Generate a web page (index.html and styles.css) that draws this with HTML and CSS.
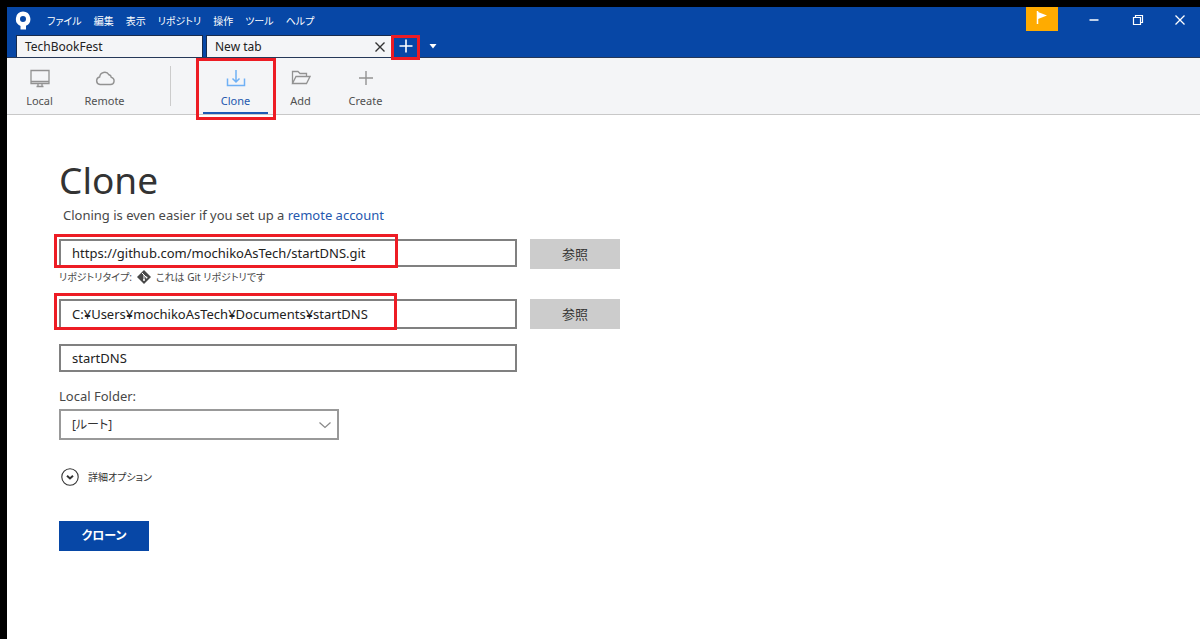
FILE: index.html
```html
<!DOCTYPE html>
<html lang="ja">
<head>
<meta charset="utf-8">
<meta name="viewport" content="width=device-width, initial-scale=1">
<title>Clone</title>
<link rel="stylesheet" href="styles.css">
</head>
<body>
<div class="window">
  <header class="titlebar">
    <div class="menu-row">
      <svg class="logo" viewBox="0 0 16 20" aria-hidden="true"><path fill="#fff" fill-rule="evenodd" d="M8 0.5a7.500 7.500 0 0 1 3 14.300V18.500H5.500V14.900A7.500 7.500 0 0 1 8 .5zM8 5a3 3 0 1 0 0 6a3 3 0 0 0 0-6z"/></svg>
      <nav class="menu">
        <button type="button">ファイル</button>
        <button type="button">編集</button>
        <button type="button">表示</button>
        <button type="button">リポジトリ</button>
        <button type="button">操作</button>
        <button type="button">ツール</button>
        <button type="button">ヘルプ</button>
      </nav>
      <div class="window-controls">
        <button type="button" class="flag" aria-label="Notifications"><svg width="12" height="14" viewBox="0 0 12 14"><path d="M1.500 0v13" stroke="#fff" stroke-width="1.500"/><path d="M2 1l9 3.500L2 8z" fill="#fff"/></svg></button>
        <button type="button" aria-label="Minimize"><svg width="12" height="12" viewBox="0 0 12 12"><path d="M1.500 6h9" stroke="#fff" stroke-width="1.500"/></svg></button>
        <button type="button" aria-label="Restore"><svg width="12" height="12" viewBox="0 0 12 12" fill="none" stroke="#fff" stroke-width="1.200"><path d="M1.500 3.500h7v7h-7zM3.500 3.500v-2h7v7h-2"/></svg></button>
        <button type="button" aria-label="Close"><svg width="12" height="12" viewBox="0 0 12 12"><path d="M1.500 1.500l9 9m0-9l-9 9" stroke="#fff" stroke-width="1.300"/></svg></button>
      </div>
    </div>
    <div class="tabs">
      <div class="tab"><button type="button" class="tab-name">TechBookFest</button></div>
      <div class="tab"><button type="button" class="tab-name">New tab</button><button type="button" class="tab-close" aria-label="Close tab"><svg width="12" height="12" viewBox="0 0 12 12"><path d="M1.500 1.500l9 9m0-9l-9 9" stroke="#333" stroke-width="1.400"/></svg></button></div>
      <button type="button" class="new-tab" aria-label="Open new tab"><svg width="14" height="14" viewBox="0 0 14 14"><path d="M7 .5v13M.5 7h13" stroke="#fff" stroke-width="1.600"/></svg><span class="mark mark-plus"></span></button>
      <button type="button" class="tab-list" aria-label="Tab list"><svg width="8" height="5" viewBox="0 0 8 5"><path d="M.5 0h7L4 4.500z" fill="#fff"/></svg></button>
    </div>
  </header>

  <nav class="toolbar">
    <button type="button" class="tool"><svg width="20" height="20" viewBox="0 0 20 20" fill="none" stroke="#929292" stroke-width="1.300"><path d="M1 2.500h18v13H1zM1 13.500h18"/><path d="M8 16v2.500h4V16M6.500 18.500h7"/></svg>Local</button>
    <button type="button" class="tool"><svg width="20" height="20" viewBox="0 0 20 20" fill="none" stroke="#929292" stroke-width="1.400"><path d="M5 16.500h10.500a3.600 3.600 0 0 0 .8-7.100A3 3 0 0 0 14 6.800A5 5 0 0 0 4.700 9A3.800 3.800 0 0 0 5 16.500z"/></svg>Remote</button>
    <span class="divider"></span>
    <button type="button" class="tool active"><svg width="20" height="20" viewBox="0 0 20 20" fill="none" stroke="#6fb1f5" stroke-width="1.500"><path d="M1.500 10.500v7h17v-7M10 2v11.500M6.500 10.500L10 14l3.500-3.500"/></svg>Clone<span class="mark mark-tool"></span></button>
    <button type="button" class="tool"><svg width="20" height="20" viewBox="0 0 20 20" fill="none" stroke="#929292" stroke-width="1.300"><path d="M1.500 15.500v-12h5.500l2 2h6.500v3M1.500 15.500l3.500-7h14l-3.500 7z"/></svg>Add</button>
    <button type="button" class="tool"><svg width="20" height="20" viewBox="0 0 20 20"><path d="M10 3v14M3 10h14" stroke="#929292" stroke-width="1.400"/></svg>Create</button>
  </nav>

  <main class="content">
    <h1>Clone</h1>
    <p class="hint">Cloning is even easier if you set up a <a href="#">remote account</a></p>
    <form class="form">
      <div class="row">
        <div class="field"><input type="text" aria-label="リポジトリ URL" value="https://github.com/mochikoAsTech/startDNS.git"><span class="mark mark-url"></span></div>
        <button type="button" class="browse">参照</button>
      </div>
      <p class="repo-type">リポジトリタイプ: <svg width="14" height="14" viewBox="0 0 14 14" aria-hidden="true"><path d="M7 0l7 7-7 7-7-7z" fill="#484848"/><path d="M5 3l2 2v5M7 5l2.500 2.500" stroke="#fff" fill="none"/><circle cx="7" cy="10" r="1" fill="#fff"/><circle cx="9.500" cy="7.500" r="1" fill="#fff"/></svg> これは Git リポジトリです</p>
      <div class="row">
        <div class="field tall"><input type="text" aria-label="保存先のパス" value="C:¥Users¥mochikoAsTech¥Documents¥startDNS"><span class="mark mark-path"></span></div>
        <button type="button" class="browse">参照</button>
      </div>
      <div class="field name"><input type="text" aria-label="名前" value="startDNS"></div>
      <label class="folder-label" for="folder">Local Folder:</label>
      <div class="folder">
        <select id="folder"><option>[ルート]</option></select>
        <svg class="chevron" width="12" height="8" viewBox="0 0 12 8"><path d="M.5 1.500L6 6.500l5.500-5" fill="none" stroke="#888" stroke-width="1.200"/></svg>
      </div>
      <button type="button" class="advanced"><svg width="18" height="18" viewBox="0 0 18 18" fill="none" stroke="#333"><circle cx="9" cy="9" r="8.200" stroke-width="1.100"/><path d="M6 7.800l3 2.700 3-2.700" stroke-width="2"/></svg>詳細オプション</button>
      <button type="submit" class="submit">クローン</button>
    </form>
  </main>
</div>
</body>
</html>
```
FILE: styles.css
```css
* { box-sizing: border-box; }

body {
  margin: 0;
  min-height: 100vh;
  padding: 7px 0 0 7px;
  display: flex;
  background: #000;
  color: #333;
  font-family: "Noto Sans", "Noto Sans CJK JP", sans-serif;
  font-size: 13px;
  font-feature-settings: "palt";
}

button, input, select { font: inherit; font-feature-settings: inherit; color: inherit; }
button { padding: 0; border: 0; background: none; }
svg { display: block; flex: none; }
p, h1 { margin: 0; }

.window { flex: 1; min-width: 0; background: #fff; }

.titlebar { background: #0747a6; color: #fff; border-bottom: 1px solid #253858; }
.menu-row { display: flex; align-items: center; height: 28px; padding-left: 8px; }
.logo { width: 16px; height: 20px; }
.menu { display: flex; gap: 12px; margin-left: 16px; font-size: 10px; line-height: 16px; white-space: nowrap; }
.window-controls { display: flex; align-self: stretch; margin-left: auto; }
.window-controls button { display: grid; place-items: center; width: 44px; height: 26px; }
.window-controls button:last-child { width: 40px; }
.window-controls .flag { width: 32px; height: 24px; margin-right: 14px; padding-bottom: 2px; background: #ffab00; }

.tabs { display: flex; align-items: stretch; gap: 3px; height: 22px; padding-left: 9px; }
.tab {
  display: flex;
  width: 187px;
  border: 1px solid #172b4d;
  border-bottom: 0;
  background: #f4f5f7;
  color: #222;
}
.tab-name { flex: 1; padding-left: 8px; text-align: left; font-size: 12px; line-height: 20px; }
.tab-close { width: 24px; display: grid; place-items: center; }
.new-tab { position: relative; display: grid; place-items: center; width: 20px; }
.tab-list { display: grid; place-items: center; width: 28px; }

.toolbar { display: flex; height: 57px; background: #f4f5f7; border-bottom: 1px solid #c8c8c8; }
.tool {
  position: relative;
  display: flex;
  flex-direction: column;
  align-items: center;
  gap: 6px;
  width: 65px;
  padding-top: 10px;
  border-bottom: 2px solid transparent;
  color: #505050;
  font-size: 11px;
  line-height: 14px;
}
.tool.active { color: #2558ae; border-bottom-color: #1d5bb5; }
.divider { width: 66px; margin: 8px 0; background: linear-gradient(#ccc, #ccc) center / 1px 100% no-repeat; }

.mark { position: absolute; border: 3px solid #ed1c24; pointer-events: none; }
.mark-plus { inset: 0 -4px -3px -5px; }
.mark-tool { inset: 0 -8px -8px -7px; }
.mark-url { inset: -5px 119px -1px -5px; }
.mark-path { inset: -6px 120px -1px -5px; }

.content { padding: 39px 52px; }
h1 { font-size: 37px; line-height: 52px; font-weight: 400; }
.hint { padding-left: 4px; font-size: 13px; line-height: 18px; color: #484848; }
.hint a { color: #2558ae; text-decoration: none; }

.form { padding-top: 15px; }
.row { display: flex; align-items: flex-start; gap: 13px; }
.field { position: relative; flex: 0 1 458px; height: 28px; }
.field.tall { height: 30px; }
.field input { width: 100%; height: 100%; padding: 0 11px; border: 2px solid #808080; background: #fff; color: #222; }
.name { width: 458px; max-width: 100%; margin-top: 15px; }
.browse { width: 90px; height: 30px; padding-bottom: 2px; background: #ccc; }
.repo-type { display: flex; align-items: center; gap: 5px; height: 16px; margin-bottom: 14px; font-size: 10px; line-height: 16px; color: #484848; }
.folder-label { display: block; margin-top: 15px; line-height: 18px; color: #484848; }
.folder { position: relative; width: 280px; margin-top: 4px; }
.folder select { display: block; width: 100%; height: 31px; padding: 0 11px; border: 2px solid #999; border-radius: 0; background: #fff; font-size: 12px; appearance: none; }
.chevron { position: absolute; right: 8px; top: 12px; pointer-events: none; }
.advanced { display: flex; align-items: center; gap: 9px; margin: 28px 0 0 2px; font-size: 10px; line-height: 18px; }
.submit { display: block; width: 90px; height: 30px; margin-top: 35px; padding-bottom: 2px; background: #0747a6; color: #fff; font-size: 12px; font-weight: 700; }
```
